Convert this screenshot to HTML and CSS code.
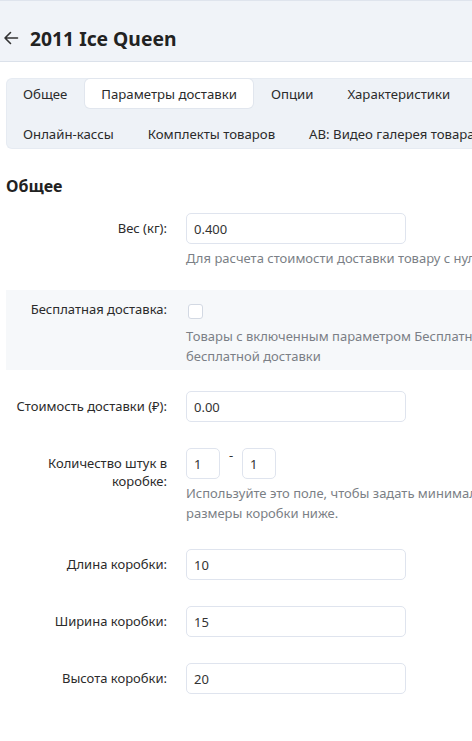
FILE: index.html
```html
<!DOCTYPE html>
<html lang="ru">
<head>
<meta charset="utf-8">
<link rel="stylesheet" href="styles.css">
</head>
<body>
<div class="page">
  <header class="header">
    <span class="back">
      <svg width="16" height="16" viewBox="0 0 16 16"><path d="M14.5 8H2M7.5 2.5L2 8l5.5 5.5" fill="none" stroke="#333" stroke-width="1.6" stroke-linecap="round" stroke-linejoin="round"/></svg>
    </span>
    <h1 class="title">2011 Ice Queen</h1>
  </header>

  <nav class="tabs">
    <span class="tab">Общее</span>
    <span class="tab active">Параметры доставки</span>
    <span class="tab">Опции</span>
    <span class="tab">Характеристики</span>
    <span class="tab">SEO</span>
    <span class="tab">Онлайн-кассы</span>
    <span class="tab">Комплекты товаров</span>
    <span class="tab">AB: Видео галерея товара</span>
  </nav>

  <h2 class="section">Общее</h2>

  <div class="row">
    <label class="label">Вес (кг):</label>
    <div class="control">
      <input class="input" value="0.400">
      <p class="help">Для расчета стоимости доставки товару с нулевым весом будет присвоен вес 0.1 кг</p>
    </div>
  </div>

  <div class="row shaded">
    <label class="label">Бесплатная доставка:</label>
    <div class="control">
      <span class="checkbox"></span>
      <p class="help check-help">Товары с включенным параметром Бесплатная доставка не будут учитываться при расчете<br>бесплатной доставки</p>
    </div>
  </div>

  <div class="row">
    <label class="label">Стоимость доставки (₽):</label>
    <div class="control">
      <input class="input" value="0.00">
    </div>
  </div>

  <div class="row">
    <label class="label">Количество штук в коробке:</label>
    <div class="control">
      <div class="range">
        <input class="input small" value="1">
        <span class="dash">-</span>
        <input class="input small" value="1">
      </div>
      <p class="help">Используйте это поле, чтобы задать минимальное и максимальное количество товаров в коробке. Укажите<br>размеры коробки ниже.</p>
    </div>
  </div>

  <div class="row">
    <label class="label">Длина коробки:</label>
    <div class="control"><input class="input" value="10"></div>
  </div>

  <div class="row">
    <label class="label">Ширина коробки:</label>
    <div class="control"><input class="input" value="15"></div>
  </div>

  <div class="row">
    <label class="label">Высота коробки:</label>
    <div class="control"><input class="input" value="20"></div>
  </div>
</div>
</body>
</html>
```

FILE: styles.css
```css
html, body {
  margin: 0;
  padding: 0;
  background: #fff;
  overflow: hidden;
}
body {
  font-family: "Noto Sans", "Open Sans", sans-serif;
  color: #2b2b2b;
  font-size: 13px;
}
.page {
  width: 760px;
}
.header {
  background: #f0f3f8;
  border-top: 1px solid #dfe4ed;
  border-bottom: 1px solid #dbe1ea;
  display: flex;
  align-items: center;
  padding: 14px 0 0 3px;
  height: 46px;
}
.back {
  display: flex;
  width: 16px;
  height: 16px;
  margin-right: 11px;
}
.title {
  margin: 0;
  font-size: 19.3px;
  font-weight: 700;
  color: #222;
}
.tabs {
  margin: 16px 0 0 6px;
  background: #eef2f7;
  border: 1px solid #e6ebf2;
  border-right: none;
  border-radius: 6px 0 0 6px;
  display: flex;
  flex-wrap: wrap;
  column-gap: 2px;
  row-gap: 11px;
  width: 620px;
}
.tab {
  height: 29px;
  line-height: 30px;
  padding: 0 16px;
  font-size: 13.2px;
  color: #2b2b2b;
  border-radius: 5px;
  white-space: nowrap;
}
.tab.active {
  background: #fff;
  box-shadow: 0 0 0 1px #e1e6ee;
}
.section {
  margin: 26px 0 12px 6px;
  font-size: 16px;
  font-weight: 700;
  line-height: 22px;
  color: #222;
}
.row {
  display: flex;
  padding: 4px 0;
  margin: 0 0 18px 6px;
  column-gap: 19px;
}
.row.shaded {
  background: #f6f8fa;
  margin-bottom: 17px;
}
.label {
  width: 161px;
  flex: none;
  text-align: right;
  padding-top: 6px;
  line-height: 18px;
  color: #2b2b2b;
}
.control {
  flex: 1;
}
.input {
  display: block;
  box-sizing: border-box;
  width: 220px;
  height: 31px;
  border: 1px solid #dfe4ee;
  border-radius: 5px;
  padding: 0 7px;
  margin: 0;
  font-family: inherit;
  font-size: 13px;
  color: #333;
  background: #fff;
  outline: none;
}
.input.small {
  width: 34px;
}
.range {
  display: flex;
  align-items: flex-start;
}
.dash {
  width: 22px;
  text-align: center;
  line-height: 14px;
  color: #333;
}
.help {
  margin: 4px 0 0;
  line-height: 20px;
  color: #7b7f86;
  white-space: nowrap;
}
.checkbox {
  display: block;
  width: 15px;
  height: 15px;
  margin: 10px 0 0 2px;
  border: 1px solid #d3d9e3;
  border-radius: 3px;
  background: #fff;
  box-sizing: border-box;
}
.check-help {
  margin-top: 7px;
}
```
